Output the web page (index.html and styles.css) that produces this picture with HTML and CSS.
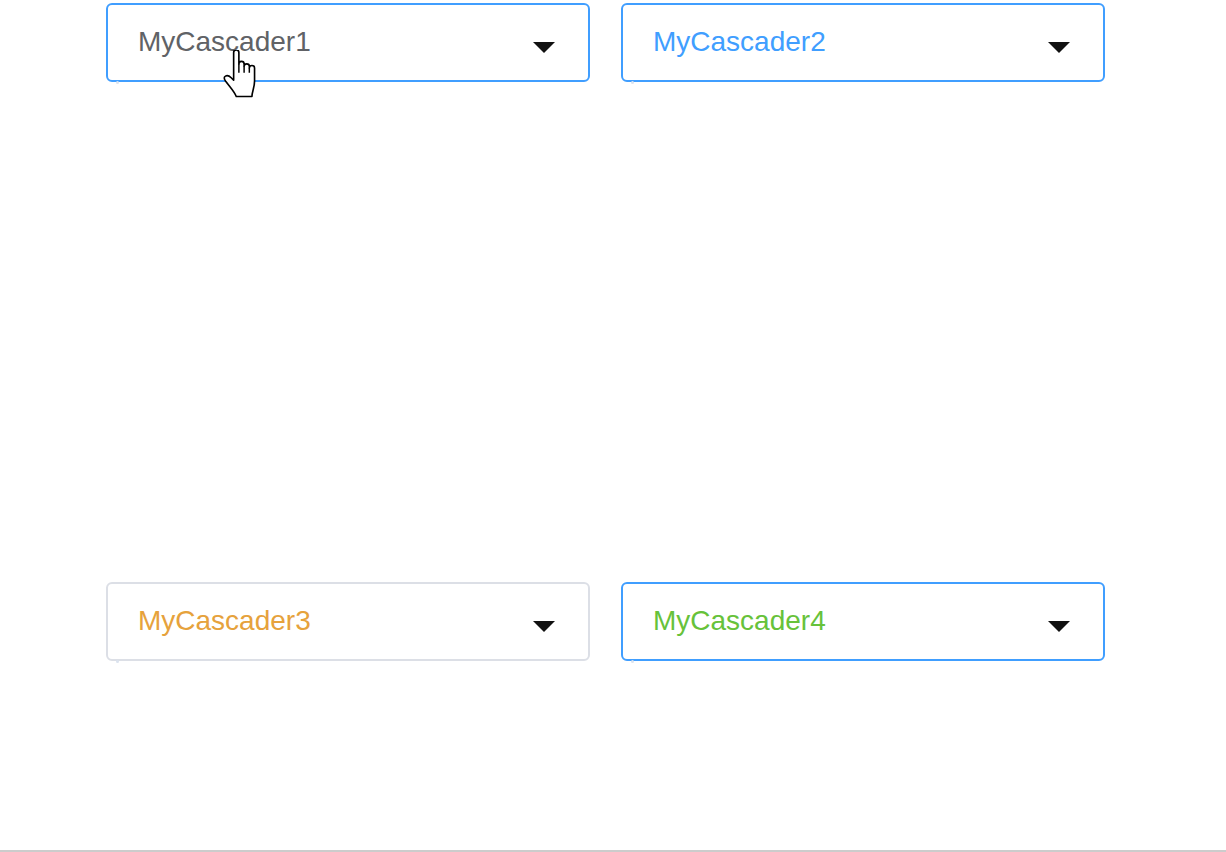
FILE: index.html
```html
<!DOCTYPE html>
<html>
<head>
<meta charset="utf-8">
<link rel="stylesheet" href="styles.css">
</head>
<body>
<div class="page">
  <div class="grid">
    <div class="cascader is-focus">
      <span class="label label-default">MyCascader1</span>
      <span class="caret"></span>
      <span class="dot"></span>
    </div>
    <div class="cascader is-focus">
      <span class="label label-primary">MyCascader2</span>
      <span class="caret"></span>
      <span class="dot"></span>
    </div>
    <div class="cascader">
      <span class="label label-warning">MyCascader3</span>
      <span class="caret"></span>
      <span class="dot"></span>
    </div>
    <div class="cascader is-focus">
      <span class="label label-success">MyCascader4</span>
      <span class="caret"></span>
      <span class="dot"></span>
    </div>
  </div>
  <svg class="pointer" width="38" height="49" viewBox="0 0 23 30">
    <path d="M7,1.6 C7,0.7 7.7,0 8.6,0 C9.5,0 10.2,0.7 10.2,1.6 L10.2,8.6 C10.2,7.7 10.9,7 11.8,7 C12.7,7 13.4,7.7 13.4,8.6 L13.4,10 C13.4,9.2 14.1,8.5 15,8.5 C15.9,8.5 16.6,9.2 16.6,10 L16.6,11 C16.6,10.2 17.3,9.5 18.2,9.5 C19.1,9.5 19.8,10.2 19.8,11 L19.8,19 C19.8,23 18.2,25.5 18.2,28.5 L8.6,28.5 C7.5,25.5 5,23 2,19 C1,17.5 1,16.5 2,16 C3,15.3 4.5,16 5.5,17 L7,18.5 Z" fill="#fff" stroke="#000" stroke-width="1" stroke-linejoin="round"/>
    <path d="M10.2,8.6 L10.2,14 M13.4,10 L13.4,14 M16.6,11 L16.6,14" fill="none" stroke="#000" stroke-width="0.9"/>
  </svg>
</div>
</body>
</html>
```
FILE: styles.css
```css
html, body {
  margin: 0;
  padding: 0;
  background: #fff;
}

.page {
  position: relative;
  height: 850px;
  border-bottom: 2px solid #cccccc;
  font-family: "Liberation Sans", Arial, sans-serif;
}

.grid {
  display: grid;
  grid-template-columns: 484px 484px;
  column-gap: 31px;
  row-gap: 500px;
  padding: 3px 0 0 106px;
}

.cascader {
  position: relative;
  box-sizing: border-box;
  height: 79px;
  border: 2px solid #dcdfe6;
  border-radius: 6px;
  display: flex;
  align-items: center;
  justify-content: space-between;
  padding: 0 33px 0 30px;
}

.cascader.is-focus {
  border-color: #409eff;
}

.label {
  font-size: 28px;
  line-height: 1;
  margin-top: -2px;
}

.label-default { color: #606266; }
.label-primary { color: #409eff; }
.label-warning { color: #e6a23c; }
.label-success { color: #67c23a; }

.caret {
  width: 0;
  height: 0;
  margin-top: 9px;
  border-left: 11px solid transparent;
  border-right: 11px solid transparent;
  border-top: 11px solid #111;
}

.dot {
  position: absolute;
  left: 8px;
  top: calc(100% + 1px);
  width: 3px;
  height: 3px;
  border-radius: 50%;
  background: #dbe3ef;
}

.pointer {
  position: absolute;
  left: 222px;
  top: 50px;
}
```
